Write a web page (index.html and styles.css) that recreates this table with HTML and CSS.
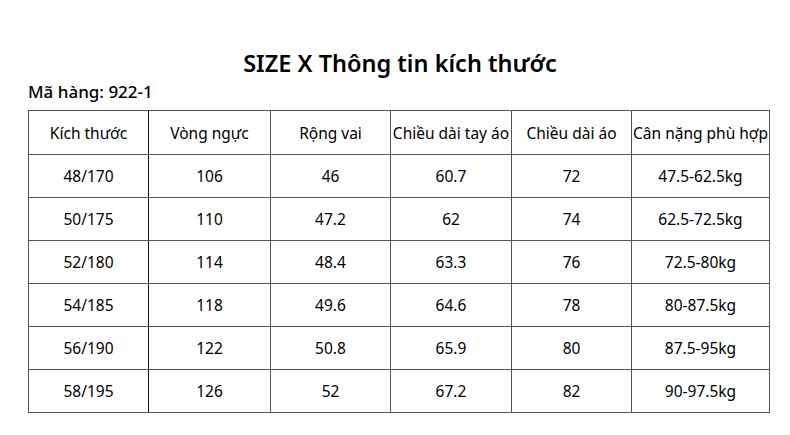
FILE: index.html
```html
<!DOCTYPE html>
<html lang="vi">
<head>
<meta charset="utf-8">
<link rel="stylesheet" href="styles.css">
</head>
<body>
<div class="page">
  <h1 class="title">SIZE X Thông tin kích thước</h1>
  <div class="code">Mã hàng: 922-1</div>
  <table class="sizes">
    <colgroup>
      <col class="c1"><col class="c2"><col class="c3"><col class="c4"><col class="c5"><col class="c6">
    </colgroup>
    <thead>
      <tr><th>Kích thước</th><th>Vòng ngực</th><th>Rộng vai</th><th>Chiều dài tay áo</th><th>Chiều dài áo</th><th>Cân nặng phù hợp</th></tr>
    </thead>
    <tbody>
      <tr><td>48/170</td><td>106</td><td>46</td><td>60.7</td><td>72</td><td>47.5-62.5kg</td></tr>
      <tr><td>50/175</td><td>110</td><td>47.2</td><td>62</td><td>74</td><td>62.5-72.5kg</td></tr>
      <tr><td>52/180</td><td>114</td><td>48.4</td><td>63.3</td><td>76</td><td>72.5-80kg</td></tr>
      <tr><td>54/185</td><td>118</td><td>49.6</td><td>64.6</td><td>78</td><td>80-87.5kg</td></tr>
      <tr><td>56/190</td><td>122</td><td>50.8</td><td>65.9</td><td>80</td><td>87.5-95kg</td></tr>
      <tr><td>58/195</td><td>126</td><td>52</td><td>67.2</td><td>82</td><td>90-97.5kg</td></tr>
    </tbody>
  </table>
</div>
</body>
</html>
```
FILE: styles.css
```css
html, body {
  margin: 0;
  padding: 0;
  background: #fff;
}
body {
  font-family: "Noto Sans", "Open Sans", sans-serif;
  color: #000;
}
.page {
  width: 790px;
  height: 435px;
  padding: 0 21px 0 28px;
  box-sizing: border-box;
  display: flex;
  flex-direction: column;
}
.title {
  margin: 46px 0 0 0;
  font-size: 23.5px;
  line-height: 34px;
  font-weight: 600;
  text-align: center;
  padding-left: 3px;
}
.code {
  margin-top: 0;
  font-size: 17px;
  line-height: 24px;
  font-weight: 500;
  height: 30px;
}
.sizes {
  border-collapse: collapse;
  width: 741px;
  table-layout: fixed;
  border: 1px solid #333;
}
.c1 { width: 120px; }
.c2 { width: 122px; }
.c3 { width: 120px; }
.c4 { width: 121px; }
.c5 { width: 120px; }
.c6 { width: 138px; }
.sizes th, .sizes td {
  border: 1px solid #555;
  text-align: center;
  padding: 0;
  font-size: 15.5px;
  font-weight: 400;
  white-space: nowrap;
  overflow: visible;
}
.sizes th {
  height: 43px;
}
.sizes td {
  height: 42px;
}
.sizes td:first-child, .sizes th:first-child {
  border-right-color: #111;
}
```
